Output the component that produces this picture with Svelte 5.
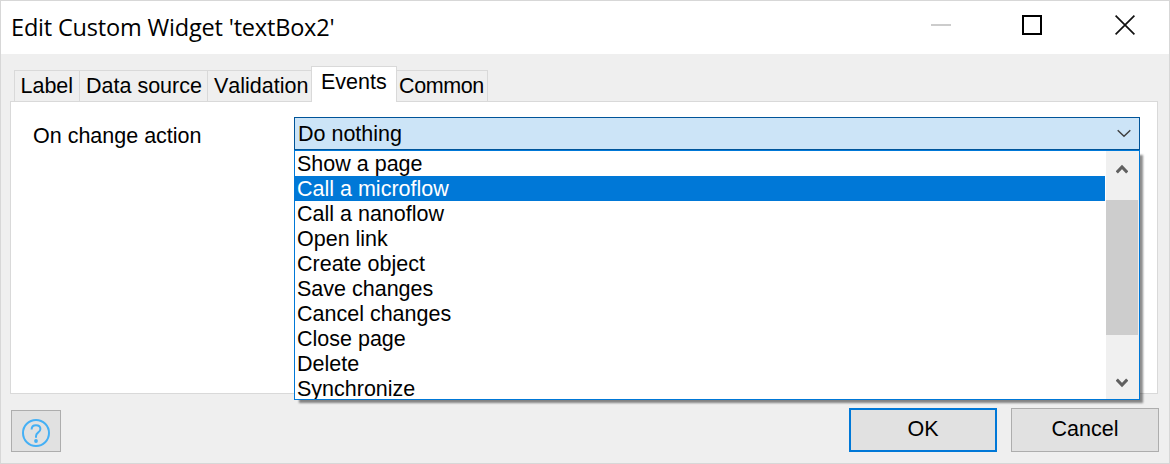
<script>
  const tabs = [
    { name: 'Label', width: 65 },
    { name: 'Data source', width: 128 },
    { name: 'Validation', width: 104 },
    { name: 'Events', width: 86 },
    { name: 'Common', width: 91 }
  ];
  const options = [
    'Show a page',
    'Call a microflow',
    'Call a nanoflow',
    'Open link',
    'Create object',
    'Save changes',
    'Cancel changes',
    'Close page',
    'Delete',
    'Synchronize'
  ];
  let active = $state('Events');
  let selected = $state('Call a microflow');
</script>

<div class="window">
  <header>
    <h1>Edit Custom Widget 'textBox2'</h1>
    <div class="controls">
      <svg width="20" height="20" viewBox="0 0 20 20"><path d="M0 10H20" stroke="#ccc" stroke-width="2" /></svg>
      <svg width="20" height="20" viewBox="0 0 20 20"><rect x="1" y="1" width="18" height="18" fill="none" stroke="#000" stroke-width="2" /></svg>
      <svg width="20" height="20" viewBox="0 0 20 20"><path d="M.6 .6L19.4 19.4M19.4 .6L.6 19.4" stroke="#111" stroke-width="1.7" /></svg>
    </div>
  </header>

  <nav>
    {#each tabs as tab}
      <button class="tab" class:active={active === tab.name} style="width: {tab.width}px" onclick={() => (active = tab.name)}>{tab.name}</button>
    {/each}
  </nav>

  <main>
    <span class="label">On change action</span>
    <div class="combo">
      <div class="field">
        <span>Do nothing</span>
        <svg width="14" height="9" viewBox="0 0 14 9"><path d="M.7 1.2L7 7.3L13.3 1.2" fill="none" stroke="#404040" stroke-width="1.5" /></svg>
      </div>
      <div class="menu">
        <div class="list">
          {#each options as option}
            <button class="option" class:selected={selected === option} onclick={() => (selected = option)}>{option}</button>
          {/each}
        </div>
        <div class="scroll">
          <svg width="12" height="10" viewBox="0 0 12 10"><path d="M.8 8.4L6 2.9L11.2 8.4" fill="none" stroke="#606060" stroke-width="3" /></svg>
          <div class="thumb"></div>
          <svg class="down" width="12" height="10" viewBox="0 0 12 10"><path d="M.8 1.6L6 7.1L11.2 1.6" fill="none" stroke="#606060" stroke-width="3" /></svg>
        </div>
      </div>
    </div>
  </main>

  <footer>
    <button class="help" aria-label="Help">
      <svg width="30" height="30" viewBox="0 0 30 30" fill="none" stroke="#45b0f5" stroke-width="2">
        <circle cx="15" cy="15" r="13" />
        <path d="M10.6 11.6C10.6 8.7 12.3 7.2 15 7.2C17.6 7.2 19.4 8.8 19.4 11C19.4 12.7 18.4 13.6 17 14.6C15.5 15.7 15 16.4 15 18.2V19.8" />
        <circle cx="15" cy="23" r="1.9" fill="#45b0f5" stroke="none" />
      </svg>
    </button>
    <button class="action primary">OK</button>
    <button class="action">Cancel</button>
  </footer>
</div>

<style>
  :global(body) { margin: 0; }
  .window, .window * { box-sizing: border-box; }
  .window {
    width: 1170px;
    height: 464px;
    border: 1px solid #d7d7d7;
    background: #efefef;
    font: 21.5px/25px "Liberation Sans", Arial, sans-serif;
    font-kerning: none;
    color: #000;
    display: flex;
    flex-direction: column;
    overflow: hidden;
  }
  button {
    font: inherit;
    font-kerning: none;
    letter-spacing: inherit;
    color: inherit;
    padding: 0;
    margin: 0;
    border: 0;
    white-space: nowrap;
  }
  svg { display: block; flex: none; }
  header {
    height: 53px;
    flex: none;
    background: #fff;
    display: flex;
    justify-content: space-between;
    padding: 0 34px 0 10px;
  }
  h1 {
    margin: 0;
    font: 400 23.5px/52px "Open Sans", "Segoe UI", sans-serif;
    letter-spacing: -0.18px;
    white-space: nowrap;
  }
  .controls { display: flex; padding-top: 14px; }
  .controls svg + svg { margin-left: 71px; }
  .controls svg:last-child { margin-left: 73px; }
  nav {
    display: flex;
    align-items: flex-end;
    height: 47px;
    flex: none;
    padding-left: 13px;
  }
  .tab {
    height: 31px;
    border: 1px solid #d9d9d9;
    border-right: 0;
    border-bottom: 0;
    background: #efefef;
    padding-left: 6px;
    text-align: left;
    line-height: 30px;
  }
  .tab:first-child { padding-left: 5.5px; }
  .tab:last-child {
    border-left: 0;
    border-right: 1px solid #d9d9d9;
    padding-left: 2px;
    letter-spacing: -0.4px;
  }
  .tab.active {
    height: 36px;
    margin-bottom: -1px;
    position: relative;
    border-right: 1px solid #d9d9d9;
    background: #fff;
    padding: 0 0 5px 9px;
  }
  main {
    height: 293px;
    width: 1148px;
    flex: none;
    margin-left: 9px;
    border: 1px solid #d9d9d9;
    background: #fff;
    display: flex;
    padding: 15px 0 0 22px;
  }
  .label { width: 261px; line-height: 38px; }
  .combo { width: 846px; position: relative; height: 33px; }
  .field {
    height: 33px;
    border: 1px solid #005499;
    background: #cce4f7;
    display: flex;
    align-items: center;
    justify-content: space-between;
    padding: 0 8px 0 3px;
  }
  .field span { line-height: 33px; padding-top: 2px; }
  .menu {
    position: absolute;
    left: 0;
    top: 33px;
    width: 846px;
    height: 250px;
    border: 1px solid #0078d7;
    background: #fff;
    display: flex;
    box-shadow: 4px 4px 2px -1px rgba(0, 0, 0, 0.45);
    z-index: 1;
  }
  .list { width: 812px; flex: none; height: 248px; overflow: hidden; }
  .option {
    display: block;
    width: 810px;
    height: 25px;
    padding: 2px 0 0 2px;
    text-align: left;
    background: #fff;
    line-height: 23px;
  }
  .option.selected { background: #0078d7; color: #fff; }
  .scroll {
    width: 33px;
    margin-left: -1px;
    background: #f0f0f0;
    display: flex;
    flex-direction: column;
    padding: 13px 0 11px;
  }
  .scroll svg { margin-left: 10px; }
  .thumb { width: 32px; height: 135px; margin-top: 26px; background: #cdcdcd; }
  .scroll .down { margin-top: auto; }
  footer { display: flex; padding: 14px 10px 0; }
  .help {
    width: 50px;
    height: 42px;
    margin-top: 2px;
    margin-right: auto;
    border: 1px solid #adadad;
    background: #e1e1e1;
    padding: 3px 0 0 9px;
  }
  .action {
    width: 148px;
    height: 44px;
    border: 1px solid #adadad;
    background: #e1e1e1;
    margin-left: 14px;
    padding-bottom: 2px;
    text-align: center;
  }
  .primary { border: 2px solid #0078d7; }
</style>
